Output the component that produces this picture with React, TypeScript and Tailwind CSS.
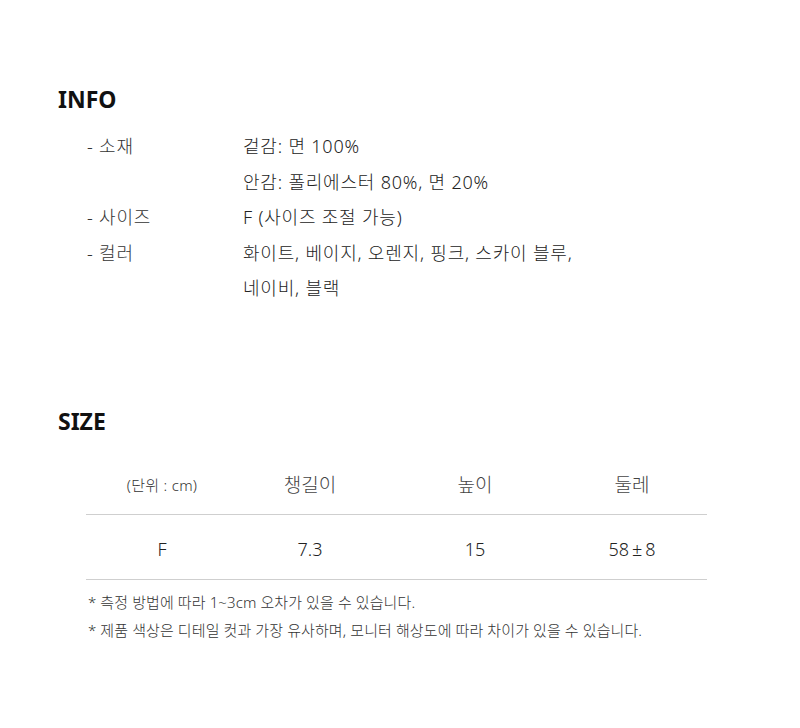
import React from 'react';

const info = [
  { label: '소재', values: ['겉감: 면 100%', '안감: 폴리에스터 80%, 면 20%'] },
  { label: '사이즈', values: ['F (사이즈 조절 가능)'] },
  { label: '컬러', values: ['화이트, 베이지, 오렌지, 핑크, 스카이 블루,', '네이비, 블랙'] },
];

const font = { fontFamily: '"Noto Sans", "Noto Sans CJK KR", sans-serif' };

const App: React.FC = () => {
  return (
    <div className="w-[800px] h-[728px] bg-white text-[#333]" style={font}>
      <div className="pt-[83px] pl-[58px]">
        <h2 className="text-[23px] leading-[32px] font-bold text-[#111]">INFO</h2>

        <div className="mt-[14px] pl-[29px] text-[18px] leading-[35.5px] tracking-[0.8px] text-[#222] font-light">
          {info.map((row) => (
            <div key={row.label} className="flex">
              <div className="w-[156px] shrink-0 text-[#333]">- {row.label}</div>
              <div>
                {row.values.map((v) => (
                  <div key={v}>{v}</div>
                ))}
              </div>
            </div>
          ))}
        </div>

        <h2 className="mt-[98px] text-[23px] leading-[32px] font-bold text-[#111]">SIZE</h2>
      </div>

      <div className="ml-[86px] w-[621px] mt-[20px] font-light">
        <div className="grid grid-cols-[152px_144px_186px_128px] h-[58px] items-center text-center border-b border-[#cfcfcf]">
          <div className="text-[15px] text-[#333] tracking-[0.3px]">(단위 : cm)</div>
          <div className="text-[19px] text-[#444]">챙길이</div>
          <div className="text-[19px] text-[#444]">높이</div>
          <div className="text-[19px] text-[#444]">둘레</div>
        </div>
        <div className="grid grid-cols-[152px_144px_186px_128px] h-[65px] pt-[6px] items-center text-center text-[18px] text-[#222] border-b border-[#cfcfcf]">
          <div>F</div>
          <div>7.3</div>
          <div>15</div>
          <div>58<span className="mx-[3px]">±</span>8</div>
        </div>
      </div>

      <div className="ml-[88px] mt-[8px] text-[15px] leading-[28px] tracking-[0.1px] text-[#333] font-light">
        <p>* 측정 방법에 따라 1~3cm 오차가 있을 수 있습니다.</p>
        <p>* 제품 색상은 디테일 컷과 가장 유사하며, 모니터 해상도에 따라 차이가 있을 수 있습니다.</p>
      </div>
    </div>
  );
};

export default App;
